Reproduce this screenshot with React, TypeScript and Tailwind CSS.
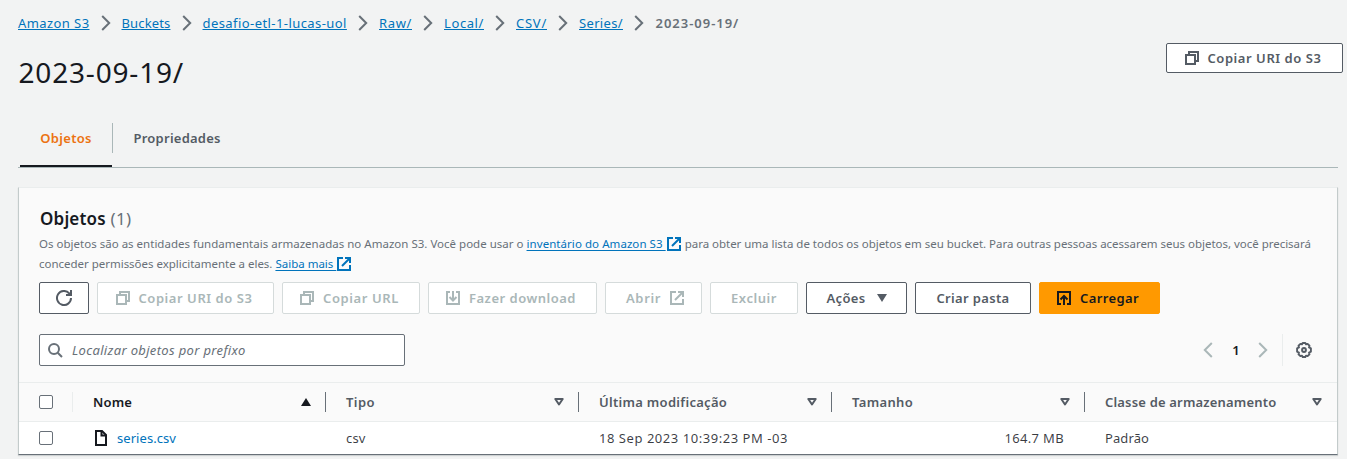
import type { ReactNode } from 'react';

type IconProps = { className?: string };

function Icon({ className = '', children }: IconProps & { children: ReactNode }) {
  return (
    <svg viewBox="0 0 16 16" fill="none" stroke="currentColor" strokeWidth="2" className={`size-4 shrink-0 ${className}`}>
      {children}
    </svg>
  );
}

const CopyIcon = (p: IconProps) => (
  <Icon {...p}>
    <path d="M2 5h9v9H2z" />
    <path d="M5 5V2h9v9h-3" />
  </Icon>
);

const ExternalIcon = (p: IconProps) => (
  <Icon {...p}>
    <path d="M7 2H2v12h12V9" />
    <path d="M9 2h5v5M14 2 6 10" />
  </Icon>
);

const DownloadIcon = (p: IconProps) => (
  <Icon {...p}>
    <path d="M5 2H2v12h12V2h-3" />
    <path d="M8 1v9.500M4.500 7 8 10.500 11.500 7" />
  </Icon>
);

const UploadIcon = (p: IconProps) => (
  <Icon {...p}>
    <path d="M5 14H2V2h12v12h-3" />
    <path d="M8 15V6M4.500 9.500 8 6l3.500 3.500" />
  </Icon>
);

const RefreshIcon = (p: IconProps) => (
  <Icon {...p}>
    <path d="M15 8A7 7 0 1 1 13.200 3.300L15 5" />
    <path d="M10 5h5V0" />
  </Icon>
);

const ChevronRight = (p: IconProps) => (
  <Icon {...p}>
    <path d="m4.200 1 7 7-7 7" />
  </Icon>
);

const ChevronLeft = (p: IconProps) => (
  <Icon {...p}>
    <path d="m11.800 1-7 7 7 7" />
  </Icon>
);

const SearchIcon = (p: IconProps) => (
  <Icon {...p}>
    <circle cx="7" cy="7" r="5" />
    <path d="m10.700 10.700 4.300 4.300" />
  </Icon>
);

const FileIcon = (p: IconProps) => (
  <Icon {...p}>
    <path d="M3 1h6l4 4v10H3z" />
    <path d="M8.500 1v4.500H13" />
  </Icon>
);

const GearIcon = (p: IconProps) => (
  <Icon {...p}>
    <path
      strokeLinejoin="round"
      strokeWidth="1.900"
      d="M6.700 1h2.600l.7 1.400 1.600-.5 1.900 1.800-.5 1.700 1.900.9v3.400l-1.900.9.5 1.700-1.900 1.800-1.600-.5-.7 1.400H6.700L6 13.600l-1.600.5-1.900-1.800.5-1.700-1.900-.9V6.300L3 5.400l-.5-1.700 1.900-1.800 1.600.5z"
    />
    <circle cx="8" cy="8" r="1.900" />
  </Icon>
);

const CaretDown = () => (
  <svg viewBox="0 0 10 8" className="h-2 w-2.5 shrink-0" fill="currentColor" stroke="none">
    <path d="M0 0h10L5 8z" />
  </svg>
);

const SortIcon = () => (
  <svg viewBox="0 0 10 8" className="h-2 w-2.5 shrink-0" fill="none" stroke="currentColor" strokeWidth="2" strokeLinejoin="round">
    <path d="M1.300 1h7.400L5 6.500z" />
  </svg>
);

const SortAscIcon = () => (
  <svg viewBox="0 0 10 8" className="h-2 w-2.5 shrink-0" fill="currentColor">
    <path d="M0 8h10L5 0z" />
  </svg>
);

const crumbs = [
  { label: 'Amazon S3', cls: 'w-[71.5px] tracking-[0.42px]' },
  { label: 'Buckets', cls: 'w-[49px] tracking-[0.15px]' },
  { label: 'desafio-etl-1-lucas-uol', cls: 'w-[144.5px] tracking-[0.43px]' },
  { label: 'Raw/', cls: 'w-[33px] tracking-[0.64px]' },
  { label: 'Local/', cls: 'w-[40px] tracking-[0.6px]' },
  { label: 'CSV/', cls: 'w-[31px] tracking-[0.75px]' },
  { label: 'Series/', cls: 'w-[44px] tracking-[0.34px]' },
];

function Button({ className, children }: { className: string; children: ReactNode }) {
  return (
    <button className={`flex shrink-0 items-center justify-center whitespace-nowrap rounded-[2px] border font-semibold ${className}`}>
      {children}
    </button>
  );
}

const Checkbox = () => <span className="block size-3.5 rounded-[2px] border border-[#687078] bg-white" />;

const columns = [
  { label: 'Nome', width: 'w-[253px]', tracking: 'tracking-[0.18px]', sorted: true },
  { label: 'Tipo', width: 'w-[253px]', tracking: 'tracking-[0.44px]' },
  { label: 'Última modificação', width: 'w-[253px]', tracking: 'tracking-[0.29px]' },
  { label: 'Tamanho', width: 'w-[253px]', tracking: 'tracking-[0.35px]' },
  { label: 'Classe de armazenamento', width: 'w-[252px]', tracking: 'tracking-[0.18px]', last: true },
];

export default function App() {
  return (
    <div className="h-[459px] w-[1347px] overflow-hidden bg-[#f2f3f3] font-['Noto_Sans',sans-serif] text-[13px] leading-5 text-[#545b64]">
      <nav className="flex h-[43px] items-center pl-[18px] pt-[3px]">
        {crumbs.map((c) => (
          <div key={c.label} className="flex items-center">
            <a className={`whitespace-nowrap text-[#0073bb] underline underline-offset-1 ${c.cls}`}>{c.label}</a>
            <ChevronRight className="mx-2 text-[#687078]" />
          </div>
        ))}
        <span className="pl-[0.5px] font-semibold tracking-[0.98px] text-[#687078]">2023-09-19/</span>
      </nav>

      <header className="flex h-20 items-start justify-between pl-[18.5px] pr-1">
        <h1 className="pt-[11px] text-[28px] leading-9 tracking-[0.82px] text-[#16191f]">2023-09-19/</h1>
        <Button className="h-[30px] w-[177px] gap-2 border-[#545b64] bg-white pr-1 tracking-[0.55px]">
          <CopyIcon />
          Copiar URI do S3
        </Button>
      </header>

      <div className="ml-[18px] flex h-[45px] w-[1320px] border-b border-[#aab7b8] pl-0.5 font-semibold">
        <div className="flex h-[44px] w-[92px] items-start justify-center border-b-2 border-[#16191f] pt-[5px] tracking-[0.31px] text-[#ec7211]">
          Objetos
        </div>
        <div className="h-[30px] w-px bg-[#aab7b8]" />
        <div className="pl-[20.5px] pt-[5px] tracking-[0.24px]">Propriedades</div>
      </div>

      <section className="ml-[18px] mt-[19px] flex h-[268px] w-[1320px] flex-col border border-[#c3cbcb] border-b-[#687078] border-t-[#eaeded] bg-[#fafafa] shadow-[0_1px_1px_rgba(0,28,36,0.15)]">
        <div className="flex h-[194px] flex-col pl-5">
          <h2 className="mt-5 pl-px text-[17px] font-semibold leading-[22px] tracking-[0.18px] text-[#16191f]">
            Objetos <span className="font-normal tracking-[0.36px] text-[#687078]">(1)</span>
          </h2>
          <p className="mt-1 whitespace-nowrap text-[11.5px] leading-5 text-[#687078]">
            <span className="tracking-[0.01px]">
              Os objetos são as entidades fundamentais armazenadas no Amazon S3. Você pode usar o{' '}
            </span>
            <a className="text-[#0073bb] underline underline-offset-2">
              <span className="tracking-[0.06px]">inventário do Amazon S3 </span>
              <ExternalIcon className="inline-block align-[-4px]" />
            </a>{' '}
            <span className="tracking-[-0.025px]">
              para obter uma lista de todos os objetos em seu bucket. Para outras pessoas acessarem seus objetos, você precisará
            </span>
            <br />
            <span className="tracking-[-0.02px]">conceder permissões explicitamente a eles.</span>{' '}
            <a className="text-[#0073bb] underline underline-offset-2">
              Saiba mais <ExternalIcon className="inline-block align-[-4px]" />
            </a>
          </p>

          <div className="mt-2 flex gap-2">
            <Button className="h-8 w-[50px] border-[#545b64] bg-white">
              <RefreshIcon />
            </Button>
            <Button className="h-8 w-[177px] gap-2 border-[#d5dbdb] bg-white pr-1 tracking-[0.55px] text-[#aab7b8]">
              <CopyIcon />
              Copiar URI do S3
            </Button>
            <Button className="h-8 w-[138px] gap-2 border-[#d5dbdb] bg-white pr-1 tracking-[0.61px] text-[#aab7b8]">
              <CopyIcon />
              Copiar URL
            </Button>
            <Button className="h-8 w-[169px] gap-2 border-[#d5dbdb] bg-white pr-1 tracking-[0.5px] text-[#aab7b8]">
              <DownloadIcon />
              Fazer download
            </Button>
            <Button className="h-8 w-[97px] gap-2 border-[#d5dbdb] bg-white pl-1 tracking-[0.63px] text-[#aab7b8]">
              Abrir
              <ExternalIcon />
            </Button>
            <Button className="h-8 w-[88px] border-[#d5dbdb] bg-white tracking-[0.56px] text-[#aab7b8]">Excluir</Button>
            <Button className="h-8 w-[101px] gap-[11px] border-[#545b64] bg-white tracking-[0.34px]">
              Ações
              <CaretDown />
            </Button>
            <Button className="h-8 w-[116px] border-[#545b64] bg-white tracking-[0.34px]">Criar pasta</Button>
            <Button className="h-8 w-[121px] gap-2 border-[#ff9900] bg-[#ff9900] pr-1 tracking-[0.39px] text-[#16191f]">
              <UploadIcon />
              Carregar
            </Button>
          </div>

          <div className="mt-5 flex h-8 items-center justify-between pr-[25px]">
            <div className="flex h-8 w-[366px] items-center gap-[9px] rounded-[2px] border border-[#687078] bg-white pl-[7px] italic tracking-[0.34px] text-[#687078]">
              <SearchIcon />
              Localizar objetos por prefixo
            </div>
            <div className="flex h-8 items-center">
              <ChevronLeft className="text-[#aab7b8]" />
              <span className="w-[39px] pl-px text-center font-semibold text-[#16191f]">1</span>
              <ChevronRight className="text-[#aab7b8]" />
              <span className="ml-[11px] mr-[13px] h-8 w-px bg-[#eaeded]" />
              <GearIcon />
            </div>
          </div>
        </div>

        <div className="flex h-10 items-center border-y border-[#eaeded] font-semibold">
          <div className="flex h-5 w-[54px] items-center border-r border-[#eaeded] pl-5">
            <Checkbox />
          </div>
          {columns.map((c) => (
            <div
              key={c.label}
              className={`flex h-5 items-center justify-between pl-5 ${c.width} ${c.tracking} ${
                c.last ? 'pr-[15px]' : 'border-r border-[#687078] pr-[14px]'
              } ${c.sorted ? 'text-[#16191f]' : ''}`}
            >
              {c.label}
              {c.sorted ? <SortAscIcon /> : <SortIcon />}
            </div>
          ))}
        </div>

        <div className="flex h-8 items-center bg-white text-[#16191f]/85">
          <div className="w-[54px] pl-5">
            <Checkbox />
          </div>
          <div className="flex w-[253px] items-center gap-2 pl-5 tracking-[0.06px] text-[#0073bb]">
            <FileIcon className="text-[#16191f]" />
            series.csv
          </div>
          <div className="w-[253px] pl-5 tracking-[0.14px]">csv</div>
          <div className="w-[253px] pl-5 tracking-[0.54px]">18 Sep 2023 10:39:23 PM -03</div>
          <div className="w-[253px] pr-[21px] text-right tracking-[0.33px]">164.7 MB</div>
          <div className="pl-5 tracking-[0.1px]">Padrão</div>
        </div>
      </section>
    </div>
  );
}
